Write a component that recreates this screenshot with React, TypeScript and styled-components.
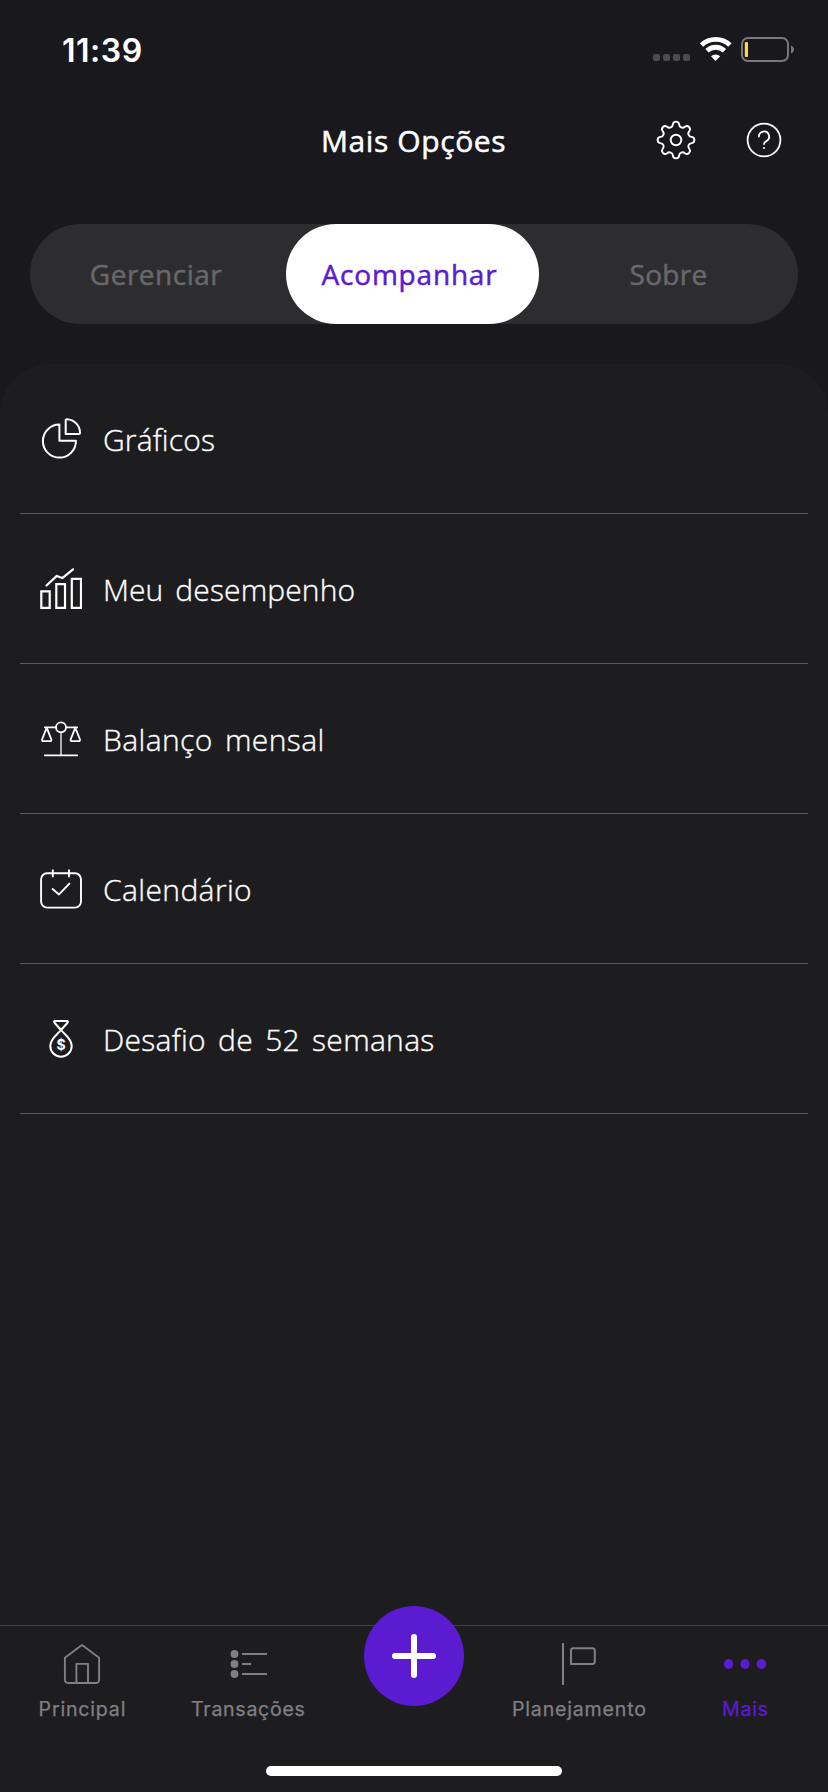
import React from 'react';
import styled, { createGlobalStyle } from 'styled-components';

const purple = '#5a1bd1';

const GlobalStyle = createGlobalStyle`
  * { box-sizing: border-box; }
  body { margin: 0; background: #19181d; }
  svg { display: block; flex: none; }
`;

const Screen = styled.div`
  width: 828px;
  height: 1792px;
  display: flex;
  flex-direction: column;
  overflow: hidden;
  background: #19181d;
  color: #fff;
  font-family: 'Open Sans', 'Noto Sans', sans-serif;
`;

const StatusBar = styled.header`
  height: 98px;
  flex: none;
  display: flex;
  justify-content: space-between;
  padding: 30px 34px 0 62px;
`;

const Clock = styled.time`
  margin-top: 1px;
  font: 600 32px/40px Inter, sans-serif;
  letter-spacing: 0.5px;
`;

const Header = styled.div`
  height: 84px;
  flex: none;
  display: grid;
  grid-template-columns: 321px 1fr 40px 48px 40px 44px;
  align-items: center;
`;

const Title = styled.h1`
  grid-column: 2;
  margin: 2px 0 0;
  font-size: 30px;
  line-height: 40px;
  font-weight: 400;
  letter-spacing: 0.6px;
  -webkit-text-stroke: 0.5px currentColor;
  white-space: nowrap;
`;

const IconButton = styled.button<{ $column: number }>`
  grid-column: ${(p) => p.$column};
  padding: 0;
  border: 0;
  background: none;
  color: #fff;
`;

const Tabs = styled.nav`
  height: 100px;
  flex: none;
  margin: 42px 30px 40px;
  display: grid;
  grid-template-columns: 256px 253px 259px;
  border-radius: 50px;
  background: #2d2d2f;
`;

const Tab = styled.button<{ $active?: boolean; $spacing: number; $shift: number }>`
  border: 0;
  padding: 0 ${(p) => p.$shift}px 0 0;
  border-radius: 50px;
  background: ${(p) => (p.$active ? '#fff' : 'transparent')};
  color: ${(p) => (p.$active ? purple : '#68686b')};
  font: 400 28px/40px 'Open Sans', sans-serif;
  letter-spacing: ${(p) => p.$spacing}px;
  -webkit-text-stroke: 0.5px currentColor;
`;

const Sheet = styled.main`
  flex: 1;
  padding: 0 20px;
  border-radius: 50px 50px 0 0;
  background: #1d1d1f;
`;

const Row = styled.div`
  height: 150px;
  display: flex;
  align-items: center;
  gap: 21px;
  padding-left: 20px;
  border-bottom: 1px solid #5b5b5e;
`;

const RowLabel = styled.span<{ $spacing: number }>`
  margin-top: 2px;
  font-size: 30px;
  line-height: 40px;
  font-weight: 300;
  letter-spacing: ${(p) => p.$spacing}px;
  word-spacing: 4px;
  -webkit-text-stroke: 0.35px currentColor;
  white-space: nowrap;
`;

const BottomBar = styled.footer`
  height: 167px;
  flex: none;
  display: flex;
  flex-direction: column;
  justify-content: space-between;
  align-items: center;
  border-top: 1px solid #414143;
  background: #1d1d1f;
  padding-bottom: 16px;
`;

const NavGrid = styled.nav`
  display: grid;
  grid-template-columns: 164px 168px 164px 166px 166px;
`;

const NavItem = styled.a<{ $active?: boolean }>`
  display: flex;
  flex-direction: column;
  align-items: center;
  padding-top: 17px;
  gap: 11px;
  color: ${(p) => (p.$active ? purple : '#808082')};
`;

const NavLabel = styled.span<{ $spacing: number }>`
  font: 400 19.6px/26px Inter, sans-serif;
  letter-spacing: ${(p) => p.$spacing}px;
  margin-right: -${(p) => p.$spacing}px;
  -webkit-text-stroke: 0.25px currentColor;
`;

const AddButton = styled.button`
  width: 100px;
  height: 100px;
  margin-top: -20px;
  justify-self: center;
  display: grid;
  place-items: center;
  padding: 0;
  border: 0;
  border-radius: 50%;
  background: ${purple};
`;

const HomeIndicator = styled.div`
  width: 296px;
  height: 10px;
  border-radius: 5px;
  background: #fff;
`;

const Icon = ({ children, width = 2 }: { children: React.ReactNode; width?: number }) => (
  <svg width="42" height="42" viewBox="0 0 42 42" fill="none" stroke="currentColor" strokeWidth={width} strokeLinecap="round" strokeLinejoin="round">
    {children}
  </svg>
);

const StatusGlyphs = styled.svg`
  margin-top: 6px;
`;

const StatusIcons = () => (
  <StatusGlyphs width="142" height="26" viewBox="0 0 142 26">
    {[1, 11, 21, 31].map((x) => (
      <rect key={x} x={x} y="18" width="7" height="7" rx="2" fill="#4c4b50" />
    ))}
    <g fill="none" stroke="#fff" strokeWidth="4.8">
      <path d="M49.5 9a20.6 20.6 0 0 1 28.4 0" />
      <path d="M55 14.8a12.4 12.4 0 0 1 17.4 0" />
    </g>
    <path d="M59 20.2a6.8 6.8 0 0 1 9.2 0l-4.1 4.3a.8.8 0 0 1-1.1 0z" fill="#fff" />
    <rect x="90" y="2" width="46" height="23" rx="6" fill="none" stroke="#78777b" strokeWidth="2" />
    <rect x="92.8" y="6" width="3.2" height="15" rx="1" fill="#ffd845" />
    <path d="M139 9.5c4 1.4 4 6.6 0 8z" fill="#78777b" />
  </StatusGlyphs>
);

const gearPath = (() => {
  const point = (degrees: number) => {
    const a = (degrees * Math.PI) / 180;
    return `${(20 + 16 * Math.cos(a)).toFixed(2)} ${(20 + 16 * Math.sin(a)).toFixed(2)}`;
  };
  let d = `M${point(-11.25)}`;
  for (let tooth = 0; tooth < 8; tooth++) {
    d += `A3.15 3.15 0 0 1 ${point(tooth * 45 + 11.25)}A3.4 3.4 0 0 0 ${point(tooth * 45 + 33.75)}`;
  }
  return d + 'Z';
})();

const GearIcon = () => (
  <svg width="40" height="40" viewBox="0 0 40 40" fill="none" stroke="currentColor" strokeWidth="1.9" strokeLinejoin="round">
    <path d={gearPath} />
    <circle cx="20" cy="20" r="5.3" />
  </svg>
);

const HelpIcon = () => (
  <svg width="40" height="40" viewBox="0 0 40 40" fill="none" stroke="currentColor" strokeWidth="1.8" strokeLinecap="round">
    <circle cx="20" cy="20" r="16.4" />
    <path d="M14.9 16.6a5.1 5.1 0 1 1 7.4 4.5c-1.7.9-2.3 1.5-2.3 3" />
    <circle cx="20" cy="28" r="1.1" fill="currentColor" stroke="none" />
  </svg>
);

const PieIcon = () => (
  <Icon width={2}>
    <path d="M19.4 6.6V22.8H35.9A16.5 16.5 0 1 1 19.4 6.6Z" />
    <path d="M25.7 1.7Q25.7 1.2 27 1.2A13.6 13.6 0 0 1 40 14.8Q40 16 39 16H25.7Z" />
  </Icon>
);

const BarsIcon = () => (
  <Icon width={2.2}>
    <g strokeLinejoin="miter">
      <path d="M1.3 23.3H9.7V39.8H1.3ZM16.3 16.2H25V39.8H16.3ZM31.8 10.8H41V39.8H31.8Z" />
    </g>
    <path d="M6.5 17.5L16.8 7.9L22.3 10.1L33 1.3" />
  </Icon>
);

const ScalesIcon = () => (
  <Icon width={1.8}>
    <circle cx="21" cy="9.3" r="5" />
    <path d="M4.8 9.3H15.6M26.4 9.3H37.2M4.8 37.3H37.2" />
    <path d="M21 14.6V37" strokeWidth="1.6" opacity=".8" />
    <path d="M6.7 9.7L2.1 21.3Q1.7 23.2 3.3 23.2H10.1Q11.7 23.2 11.3 21.3Z" />
    <path d="M35.3 9.7L30.7 21.3Q30.3 23.2 31.9 23.2H38.7Q40.3 23.2 39.9 21.3Z" />
  </Icon>
);

const CalendarIcon = () => (
  <Icon width={1.9}>
    <rect x="1.1" y="5.2" width="39.9" height="34.4" rx="6" />
    <path d="M12.8 1.4V9.3M29 1.4V9.3" strokeLinecap="butt" />
    <path d="M12.6 21L19 26.4L29.4 15.6" />
  </Icon>
);

const BagIcon = () => (
  <Icon width={2}>
    <path d="M14.7 3H27.3Q28.5 3.5 27.3 5L21 12L14.7 5Q13.5 3.5 14.7 3Z" />
    <path d="M21 12C17.5 16.5 10.3 20.6 10.3 28A10.7 10.7 0 0 0 31.7 28C31.7 20.6 24.5 16.5 21 12Z" />
    <text x="21" y="32" textAnchor="middle" fontFamily="Inter, sans-serif" fontWeight="700" fontSize="14" fill="currentColor" stroke="none">$</text>
  </Icon>
);

const HomeIcon = () => (
  <Icon width={1.9}>
    <path d="M3.9 14.8L21 2L38.1 14.8V36.5Q38.1 40 34.6 40H7.4Q3.9 40 3.9 36.5Z" />
    <path d="M15.4 39.8V20.9H27V39.8" />
  </Icon>
);

const ListIcon = () => (
  <Icon width={2}>
    {[11, 21, 31].map((y) => (
      <circle key={y} cx="7.5" cy={y} r="3.9" fill="currentColor" stroke="none" />
    ))}
    <path d="M15 11H40M15 21H24M15 31H40" strokeLinecap="butt" />
  </Icon>
);

const FlagIcon = () => (
  <Icon width={2}>
    <path d="M5 0V42" strokeLinecap="butt" />
    <path d="M13 21V7.5Q13 5.2 15.3 5.2H34.4Q36.8 5.2 36.8 7.5V18.6Q36.8 21 34.4 21Z" />
  </Icon>
);

const MoreIcon = () => (
  <Icon>
    {[4.6, 21, 37.4].map((x) => (
      <ellipse key={x} cx={x} cy="21" rx="4.7" ry="5.1" fill="currentColor" stroke="none" />
    ))}
  </Icon>
);

const rows = [
  { label: 'Gráficos', icon: <PieIcon />, spacing: 0.15 },
  { label: 'Meu desempenho', icon: <BarsIcon />, spacing: 0.12 },
  { label: 'Balanço mensal', icon: <ScalesIcon />, spacing: 0.4 },
  { label: 'Calendário', icon: <CalendarIcon />, spacing: 0.38 },
  { label: 'Desafio de 52 semanas', icon: <BagIcon />, spacing: 0.3 },
];

export default function App() {
  return (
    <>
      <GlobalStyle />
      <Screen>
        <StatusBar>
          <Clock>11:39</Clock>
          <StatusIcons />
        </StatusBar>
        <Header>
          <Title>Mais Opções</Title>
          <IconButton $column={3} aria-label="Configurações"><GearIcon /></IconButton>
          <IconButton $column={5} aria-label="Ajuda"><HelpIcon /></IconButton>
        </Header>
        <Tabs>
          <Tab $spacing={0.5} $shift={4}>Gerenciar</Tab>
          <Tab $active $spacing={0.8} $shift={6}>Acompanhar</Tab>
          <Tab $spacing={0.3} $shift={0}>Sobre</Tab>
        </Tabs>
        <Sheet>
          {rows.map((row) => (
            <Row key={row.label}>
              {row.icon}
              <RowLabel $spacing={row.spacing}>{row.label}</RowLabel>
            </Row>
          ))}
        </Sheet>
        <BottomBar>
          <NavGrid>
            <NavItem><HomeIcon /><NavLabel $spacing={0.8}>Principal</NavLabel></NavItem>
            <NavItem><ListIcon /><NavLabel $spacing={0.7}>Transações</NavLabel></NavItem>
            <AddButton aria-label="Adicionar">
              <svg width="44" height="44" viewBox="0 0 44 44" stroke="#fff" strokeWidth="6" strokeLinecap="round">
                <path d="M22 3V41M3 22H41" />
              </svg>
            </AddButton>
            <NavItem><FlagIcon /><NavLabel $spacing={0.8}>Planejamento</NavLabel></NavItem>
            <NavItem $active><MoreIcon /><NavLabel $spacing={0.7}>Mais</NavLabel></NavItem>
          </NavGrid>
          <HomeIndicator />
        </BottomBar>
      </Screen>
    </>
  );
}
